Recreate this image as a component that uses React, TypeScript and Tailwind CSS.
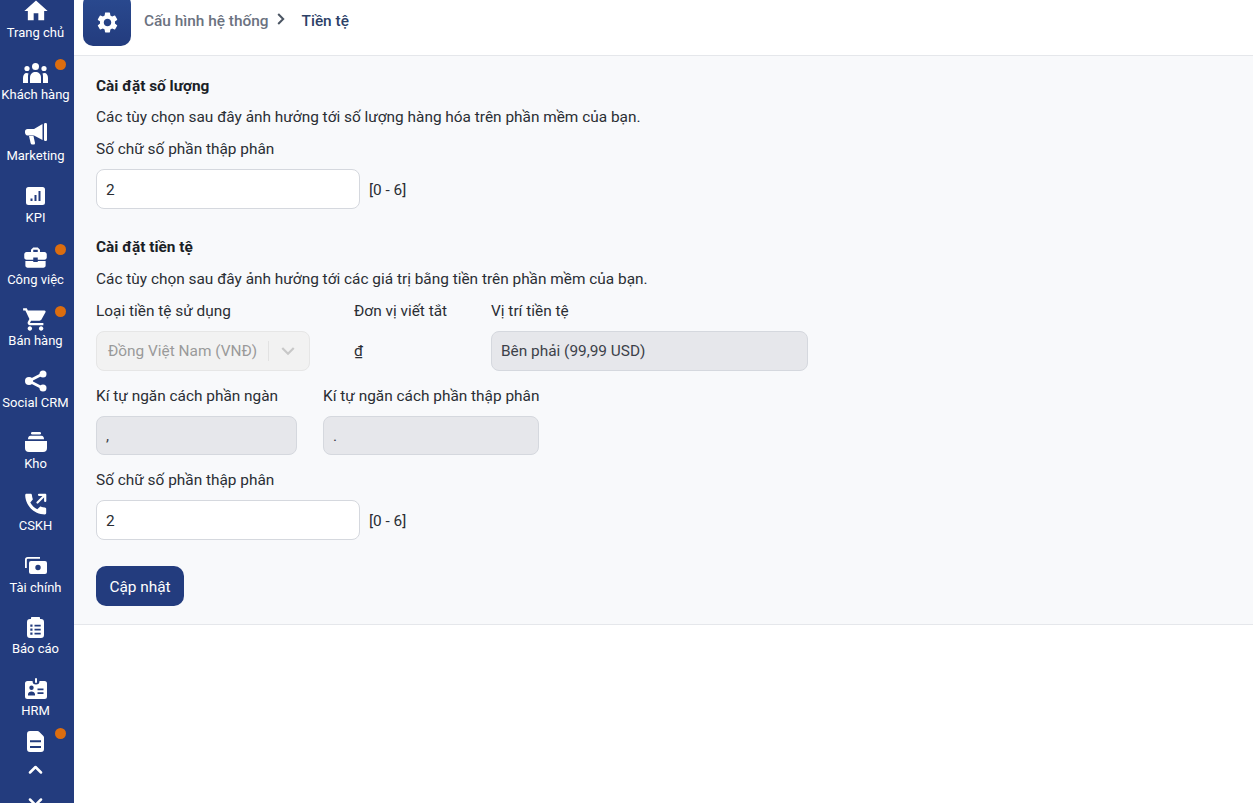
import { MdHome, MdBusinessCenter, MdShoppingCart, MdSettings, MdKeyboardArrowDown } from "react-icons/md";
import type { ReactNode } from "react";

function GroupIcon() {
  return (
    <svg viewBox="0 0 25 20" width="25" height="20" fill="currentColor">
      <circle cx="12.500" cy="3.500" r="3.500" />
      <circle cx="4" cy="5.500" r="2.600" />
      <circle cx="21" cy="5.500" r="2.600" />
      <path d="M7 20v-5.500C7 11 9.500 9 12.500 9s5.500 2 5.500 5.500V20z" />
      <path d="M0 20v-5c0-3 1.500-5 3.500-5 .8 0 1.500.2 2 .6C5 12 5 13 5 14.500V20z" />
      <path d="M25 20v-5c0-3-1.500-5-3.500-5-.8 0-1.500.2-2 .6.500 1.400.5 2.400.5 3.900V20z" />
    </svg>
  );
}

function MegaphoneIcon() {
  return (
    <svg viewBox="0 0 22 22" width="22" height="22" fill="currentColor">
      <rect x="19" y="0" width="3" height="18" rx="1.200" />
      <path d="M0 8.500C0 7 1 6 2.500 6H9l8.500-5v16L9 12.500H2.500C1 12.500 0 11 0 9.500z" />
      <path d="M4 13h4.500l1.500 7c.1.800-.4 1.500-1.200 1.500H7.200c-.8 0-1.300-.4-1.500-1.200z" />
    </svg>
  );
}

function KpiIcon() {
  return (
    <svg viewBox="0 0 19 18" width="19" height="18" fill="currentColor">
      <path
        fillRule="evenodd"
        d="M2.500 0h14A2.500 2.500 0 0 1 19 2.500v13a2.500 2.500 0 0 1-2.500 2.500h-14A2.500 2.500 0 0 1 0 15.500v-13A2.500 2.500 0 0 1 2.500 0zM4.500 11.500v2.500h2v-2.500zM8.500 8v6h2V8zM12.500 4v10h2V4z"
      />
    </svg>
  );
}

function ShareIcon() {
  return (
    <svg viewBox="0 0 22 22" width="22" height="22" fill="currentColor" stroke="currentColor">
      <line x1="17.500" y1="4" x2="4" y2="11" strokeWidth="2.600" />
      <line x1="4" y1="11" x2="17.500" y2="18" strokeWidth="2.600" />
      <circle cx="18" cy="4" r="3.500" stroke="none" />
      <circle cx="4" cy="11" r="4" stroke="none" />
      <circle cx="18" cy="18" r="3.500" stroke="none" />
    </svg>
  );
}

function KhoIcon() {
  return (
    <svg viewBox="0 0 22 20" width="22" height="20" fill="currentColor">
      <rect x="6" y="0" width="10" height="2.500" rx="1.200" />
      <path d="M5.500 3.800h11c1.600 0 2.500 1.200 2.500 3.400H3c0-2.200.9-3.400 2.500-3.400z" />
      <path d="M0 9h22v7a4 4 0 0 1-4 4H4a4 4 0 0 1-4-4z" />
    </svg>
  );
}

function CallIcon() {
  return (
    <svg viewBox="0 0 22 22" width="22" height="22" fill="currentColor">
      <path d="M1.500.8h4c.8 0 1.300.5 1.400 1.200.1 1.300.4 2.600.8 3.700.2.500.1 1-.3 1.400L5.300 9.400c1.500 3 4 5.300 7 6.800l2.400-2.200c.4-.4.9-.5 1.400-.3 1.200.4 2.400.7 3.800.8.800.1 1.300.6 1.300 1.400v4.200c0 .8-.6 1.300-1.300 1.300C9.200 21.400.5 12.700.2 2.200.2 1.400.700.8 1.500.8z" />
      <g fill="none" stroke="currentColor" strokeWidth="2.200" strokeLinecap="round" strokeLinejoin="round">
        <line x1="12.500" y1="9.500" x2="20" y2="2" />
        <polyline points="14,1.800 20.200,1.800 20.200,8" />
      </g>
    </svg>
  );
}

function MoneyIcon() {
  return (
    <svg viewBox="0 0 22 17" width="22" height="17" fill="currentColor">
      <path d="M0 2.800A2.800 2.800 0 0 1 2.800 0H15v1.800H2.800a1 1 0 0 0-1 1V11H0z" />
      <path
        fillRule="evenodd"
        d="M6 4h14a2 2 0 0 1 2 2v9a2 2 0 0 1-2 2H6a2 2 0 0 1-2-2V6a2 2 0 0 1 2-2zm7 3.800a2.700 2.700 0 1 0 0 5.400 2.700 2.700 0 0 0 0-5.400z"
      />
    </svg>
  );
}

function ReportIcon() {
  return (
    <svg viewBox="0 0 17 21" width="17" height="21" fill="currentColor">
      <path
        fillRule="evenodd"
        d="M5 0h7c.6 0 1 .4 1 1v1h1a3 3 0 0 1 3 3v13a3 3 0 0 1-3 3H3a3 3 0 0 1-3-3V5a3 3 0 0 1 3-3h1V1c0-.6.4-1 1-1zM3.300 7.500v2.200h2.200V7.500zM7.500 7.700v1.800h6.200V7.700zM3.300 11.500v2.200h2.200v-2.200zM7.500 11.700v1.800h6.200v-1.800zM3.300 15.500v2.200h2.200v-2.200zM7.500 15.700v1.800h6.200v-1.800z"
      />
    </svg>
  );
}

function BadgeIcon() {
  return (
    <svg viewBox="0 0 22 21" width="22" height="21" fill="currentColor">
      <rect x="10" y="0" width="2" height="5" rx="1" />
      <path
        fillRule="evenodd"
        d="M2.500 3H7.500a3.500 3.500 0 0 0 7 0h5A2.500 2.500 0 0 1 22 5.500v13a2.500 2.500 0 0 1-2.500 2.500h-17A2.500 2.500 0 0 1 0 18.500v-13A2.500 2.500 0 0 1 2.500 3zM6.500 7.500a2.200 2.200 0 1 0 0 4.400 2.200 2.200 0 0 0 0-4.400zM3 17.500h7v-1.200c0-1.700-1.600-2.800-3.500-2.800S3 14.600 3 16.300zM12.500 10.400v1.800h6v-1.800zM12.500 14.200v1.800h6v-1.800z"
      />
    </svg>
  );
}

function DocIcon() {
  return (
    <svg viewBox="0 0 17 21" width="17" height="21" fill="currentColor">
      <path
        fillRule="evenodd"
        d="M3 0h7.500c.6 0 1 .2 1.400.6l4.500 4.500c.4.400.6.900.6 1.400V18a3 3 0 0 1-3 3H3a3 3 0 0 1-3-3V3a3 3 0 0 1 3-3zM3 9.200v2h11v-2zM3 15v2h11v-2z"
      />
    </svg>
  );
}

function Chevron({ up }: { up?: boolean }) {
  return (
    <svg viewBox="0 0 15 9" width="15" height="9" fill="none" stroke="currentColor" strokeWidth="2.500" strokeLinecap="round" strokeLinejoin="round">
      <polyline points={up ? "2,7.500 7.500,2 13,7.500" : "2,1.500 7.500,7 13,1.500"} />
    </svg>
  );
}

const menu: { icon: ReactNode; label: string; dot?: boolean }[] = [
  { icon: <MdHome size={28} />, label: "Trang chủ" },
  { icon: <GroupIcon />, label: "Khách hàng", dot: true },
  { icon: <MegaphoneIcon />, label: "Marketing" },
  { icon: <KpiIcon />, label: "KPI" },
  { icon: <MdBusinessCenter size={27} />, label: "Công việc", dot: true },
  { icon: <MdShoppingCart size={27} />, label: "Bán hàng", dot: true },
  { icon: <ShareIcon />, label: "Social CRM" },
  { icon: <KhoIcon />, label: "Kho" },
  { icon: <CallIcon />, label: "CSKH" },
  { icon: <MoneyIcon />, label: "Tài chính" },
  { icon: <ReportIcon />, label: "Báo cáo" },
  { icon: <BadgeIcon />, label: "HRM" },
];

const inputCls = "flex h-10 items-center rounded-lg border border-[#d5d8de] bg-white px-[9px] pt-[3px] text-[#2a2e34]";
const readonlyCls = "flex items-center rounded-lg border border-[#d5d8de] bg-[#e6e7eb] px-[9px] pt-[2px] text-[#3c4149]";

export default function App() {
  return (
    <div className="flex h-[803px] w-[1253px] overflow-hidden bg-white font-['Roboto',sans-serif] text-[15.4px] text-[#2a2e34]">
      {/* sidebar */}
      <aside className="w-[74px] shrink-0 overflow-hidden bg-[#233c7e] text-white">
        <div className="-mt-[13.3px] flex flex-col">
          {menu.map((m) => (
            <div key={m.label} className="relative flex h-[61.6px] shrink-0 flex-col items-center justify-end pb-[6px] pr-[3px]">
              <span className="flex h-[30px] items-center justify-center pt-[4px]">{m.icon}</span>
              <span className="whitespace-nowrap text-[13px] leading-[18px]">{m.label}</span>
              {m.dot && <span className="absolute right-[8px] top-[11px] h-[11px] w-[11px] rounded-full bg-[#dc6d0f]" />}
            </div>
          ))}
          <div className="relative flex h-[30px] items-center justify-center pr-[3px] pt-[2px]">
            <DocIcon />
            <span className="absolute right-[8px] top-[2px] h-[11px] w-[11px] rounded-full bg-[#dc6d0f]" />
          </div>
          <div className="flex h-[28px] items-center justify-center pr-[3px]">
            <Chevron up />
          </div>
          <div className="mt-[5px] flex h-[28px] items-center justify-center pr-[3px]">
            <Chevron />
          </div>
        </div>
      </aside>

      <div className="flex min-w-0 flex-1 flex-col">
        {/* header */}
        <header className="flex h-[56px] shrink-0 items-start border-b border-[#e5e7eb] bg-white pl-[9px]">
          <div className="-mt-[6px] flex h-[52px] w-[48px] items-center justify-center rounded-[10px] bg-gradient-to-b from-[#2a4a90] to-[#233c7e] pt-[4px] text-white">
            <MdSettings size={25} />
          </div>
          <div className="flex h-[42px] items-center pt-[2px]">
            <span className="ml-[13px] font-medium text-[#6b7280]">Cấu hình hệ thống</span>
            <svg viewBox="0 0 8 12" width="8" height="12" fill="none" stroke="#4b5563" strokeWidth="2" className="ml-[8px] -mt-[7px]">
              <polyline points="1.200,1 6.200,6 1.200,11" />
            </svg>
            <span className="ml-[17px] font-medium text-[#2c4167]">Tiền tệ</span>
          </div>
        </header>

        {/* content */}
        <main className="h-[569px] shrink-0 border-b border-[#e5e7eb] bg-[#f8f9fb] pl-[22px] pt-[20px]">
          <h2 className="font-bold leading-5 text-[#1b1f27]">Cài đặt số lượng</h2>
          <p className="mt-[11px] leading-5">Các tùy chọn sau đây ảnh hưởng tới số lượng hàng hóa trên phần mềm của bạn.</p>
          <p className="mt-[12px] leading-5">Số chữ số phần thập phân</p>
          <div className="mt-[10px] flex items-center">
            <div className={`${inputCls} w-[264px]`}>2</div>
            <span className="ml-[9px] pt-[4px]">[0 - 6]</span>
          </div>

          <h2 className="mt-[28px] font-bold leading-5 text-[#1b1f27]">Cài đặt tiền tệ</h2>
          <p className="mt-[12px] leading-5">Các tùy chọn sau đây ảnh hưởng tới các giá trị bằng tiền trên phần mềm của bạn.</p>

          <div className="mt-[12px] flex">
            <div className="w-[214px]">
              <p className="leading-5">Loại tiền tệ sử dụng</p>
              <div className="mt-[10px] flex h-10 items-center rounded-lg border border-[#e6e6e6] bg-[#f2f2f2] pl-[11px] text-[#9a9a9a]">
                <span className="whitespace-nowrap pt-[2px]">Đồng Việt Nam (VNĐ)</span>
                <span className="ml-[11px] h-[20px] w-px bg-[#e2e2e2]" />
                <MdKeyboardArrowDown size={26} className="ml-[6px] text-[#c8c8c8]" />
              </div>
            </div>
            <div className="ml-[44px] w-[137px]">
              <p className="leading-5">Đơn vị viết tắt</p>
              <div className="mt-[10px] flex h-10 items-center pt-[2px] underline">₫</div>
            </div>
            <div className="w-[317px]">
              <p className="leading-5">Vị trí tiền tệ</p>
              <div className={`${readonlyCls} mt-[10px] h-10`}>Bên phải (99,99 USD)</div>
            </div>
          </div>

          <div className="mt-[15px] flex gap-[26px]">
            <div className="w-[201px]">
              <p className="leading-5">Kí tự ngăn cách phần ngàn</p>
              <div className={`${readonlyCls} mt-[10px] h-[39px]`}>,</div>
            </div>
            <div className="w-[216px]">
              <p className="whitespace-nowrap leading-5">Kí tự ngăn cách phần thập phân</p>
              <div className={`${readonlyCls} mt-[10px] h-[39px]`}>.</div>
            </div>
          </div>

          <p className="mt-[15px] leading-5">Số chữ số phần thập phân</p>
          <div className="mt-[10px] flex items-center">
            <div className={`${inputCls} w-[264px]`}>2</div>
            <span className="ml-[9px] pt-[4px]">[0 - 6]</span>
          </div>

          <button className="mt-[26px] h-10 w-[88px] rounded-[10px] bg-[#233c7e] pt-[3px] text-white">Cập nhật</button>
        </main>
      </div>
    </div>
  );
}
